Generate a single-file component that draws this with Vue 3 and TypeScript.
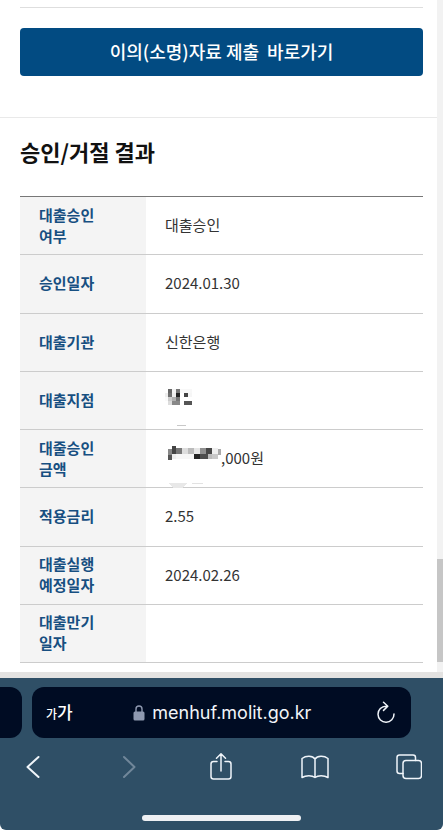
<script setup lang="ts">
interface Row {
  label: string[]
  value: string
  mask?: 'branch' | 'amount'
}

// x, y, width, height, grey (two hex digits)
type Block = [number, number, number, number, string]

const rows: Row[] = [
  { label: ['대출승인', '여부'], value: '대출승인' },
  { label: ['승인일자'], value: '2024.01.30' },
  { label: ['대출기관'], value: '신한은행' },
  { label: ['대출지점'], value: '', mask: 'branch' },
  { label: ['대줄승인', '금액'], value: ',000원', mask: 'amount' },
  { label: ['적용금리'], value: '2.55' },
  { label: ['대출실행', '예정일자'], value: '2024.02.26' },
  { label: ['대출만기', '일자'], value: '' },
]

const branch: Block[] = [
  [3, 0, 4, 4, '66'], [7, 0, 4, 4, 'f3'], [11, 0, 4, 4, '77'], [15, 0, 12, 4, 'f8'],
  [0, 4, 3, 4, 'ee'], [3, 4, 4, 4, '70'], [7, 4, 4, 4, 'ee'], [11, 4, 4, 4, '24'], [19, 4, 4, 4, '44'], [23, 4, 4, 4, 'f6'],
  [0, 8, 3, 4, 'fa'], [3, 8, 4, 4, 'cc'], [7, 8, 4, 4, 'b0'], [11, 8, 4, 4, '77'],
  [3, 12, 4, 4, 'dd'], [7, 12, 8, 4, '88'], [19, 12, 8, 4, '55'],
  [12, 36, 9, 1, 'c8'],
]

const amount: Block[] = [
  [3, 3, 4, 6, '88'], [3, 9, 4, 5, '55'], [7, 0, 4, 8, '44'], [7, 8, 4, 5, 'ee'],
  [11, 2, 6, 6, '77'], [17, 2, 6, 6, 'dd'], [23, 2, 6, 6, 'bb'], [29, 2, 6, 6, 'e6'],
  [35, 2, 6, 6, '90'], [41, 2, 6, 6, '46'], [47, 2, 6, 6, 'ee'], [53, 3, 3, 6, 'aa'],
  [11, 8, 18, 5, 'f6'], [29, 8, 6, 5, '24'], [35, 8, 8, 5, '4c'], [43, 8, 4, 5, 'bb'], [47, 8, 6, 5, 'c8'],
  [27, 37, 11, 1, 'e2'],
]

const gray = (g: string) => `#${g}${g}${g}`
</script>

<template>
  <div class="screen">
    <main class="page">
      <section class="submit">
        <button type="button" class="primary">이의(소명)자료 제출&nbsp; 바로가기</button>
      </section>
      <section class="result">
        <h2>승인/거절 결과</h2>
        <table>
          <tbody>
            <tr v-for="(row, i) in rows" :key="i">
              <th scope="row"><span v-for="part in row.label" :key="part">{{ part }}</span></th>
              <td>
                <div class="value">
                  <svg v-if="row.mask === 'branch'" width="28" height="20" viewBox="0 0 28 20" shape-rendering="crispEdges" class="mosaic" aria-hidden="true">
                    <rect v-for="([x, y, w, h, g], n) in branch" :key="n" :x="x" :y="y" :width="w" :height="h" :fill="gray(g)" />
                  </svg>
                  <svg v-if="row.mask === 'amount'" width="56" height="24" viewBox="0 0 56 24" shape-rendering="crispEdges" class="mosaic" aria-hidden="true">
                    <rect v-for="([x, y, w, h, g], n) in amount" :key="n" :x="x" :y="y" :width="w" :height="h" :fill="gray(g)" />
                    <path d="M3 37h19l-4 5H8z" fill="#e8e8e8" />
                  </svg>
                  <span>{{ row.value }}</span>
                </div>
              </td>
            </tr>
          </tbody>
        </table>
      </section>
      <div class="track" aria-hidden="true"><div class="thumb"></div></div>
    </main>

    <footer class="browser">
      <div class="tabs">
        <div class="previous"></div>
        <div class="address">
          <button type="button" class="text-size"><small>가</small>가</button>
          <div class="host">
            <svg width="12" height="16" viewBox="0 0 12 16" aria-hidden="true">
              <path d="M3 7V4a3 3 0 0 1 6 0V7" fill="none" stroke="#8e99b0" stroke-width="1.4" />
              <rect x="0.5" y="6.5" width="11" height="9" rx="1.5" fill="#8e99b0" />
            </svg>
            <span>menhuf.molit.go.kr</span>
          </div>
          <button type="button" aria-label="새로 고침">
            <svg width="24" height="24" viewBox="-4 0 24 24" class="line">
              <path d="M10 5.2A8 8 0 1 0 18 13M7.5 1.2l4.300 4-4.300 4.200" />
            </svg>
          </button>
        </div>
      </div>
      <nav class="tools">
        <button type="button" aria-label="뒤로">
          <svg width="26" height="28" viewBox="0 0 26 28" class="line bold"><path d="M17.500 4 6.500 14l11 10" /></svg>
        </button>
        <button type="button" aria-label="앞으로">
          <svg width="26" height="28" viewBox="0 0 26 28" class="line bold dim"><path d="M10 4l10.500 10L10 24" /></svg>
        </button>
        <button type="button" aria-label="공유">
          <svg width="26" height="28" viewBox="0 0 26 28" class="line">
            <path d="M9 8.500H5.500Q3 8.500 3 11V23.500q0 2.500 2.500 2.500h15Q23 26 23 23.500V11Q23 8.500 20.500 8.500H17M13 18V1M8.500 5.300 13 .8l4.500 4.500" />
          </svg>
        </button>
        <button type="button" aria-label="책갈피">
          <svg width="28" height="28" viewBox="0 0 28 28" class="line">
            <path d="M14 6C11.500 2.500 5 2.500 1 5.500V24.500C5 22 11 22 14 24.500C17 22 23 22 27 24.500V5.500C23 2.500 16.500 2.500 14 6V24.500" />
          </svg>
        </button>
        <button type="button" aria-label="탭">
          <svg width="26" height="28" viewBox="0 0 26 28" class="line">
            <rect x="7" y="7.500" width="18.500" height="18" rx="3" />
            <path d="M7 20.500H3.500Q1 20.500 1 18V4.500Q1 2 3.500 2H17Q19.500 2 19.500 4.500V7.500" />
          </svg>
        </button>
      </nav>
      <div class="home"></div>
    </footer>
  </div>
</template>

<style>
body {
  margin: 0;
  background: #fff;
}
</style>

<style scoped>
.screen {
  display: flex;
  flex-direction: column;
  min-height: 100vh;
  font-family: "Noto Sans CJK KR", sans-serif;
  color: #333;
}

.page {
  position: relative;
  padding-top: 7px;
  border-bottom: 6px solid #e3e2e1;
}

.submit {
  padding: 0 20px 41px;
  border-bottom: 1px solid #e9e9e9;
}

.submit::before {
  content: "";
  display: block;
  margin-bottom: 20px;
  border-top: 1px solid #dedede;
}

button {
  padding: 0;
  border: 0;
  background: none;
  color: #fff;
  font: inherit;
}

.primary {
  display: block;
  width: 100%;
  padding: 11px 0 13px;
  border-radius: 4px;
  background: #024b82;
  font-size: 18px;
  font-weight: 500;
  line-height: 24px;
}

.result {
  padding: 17px 20px 9px;
}

h2 {
  margin: 0 0 29px;
  color: #111;
  font-size: 22px;
  font-weight: 700;
  line-height: 32px;
}

table {
  width: 100%;
  height: 467px;
  border-collapse: collapse;
  border-top: 1px solid #777;
  font-size: 15px;
  line-height: 21px;
}

tr {
  height: 58px;
  border-bottom: 1px solid #ccc;
}

th,
td {
  padding: 6px 19px 8px;
  text-align: left;
}

th {
  width: 88px;
  background: #f4f4f4;
  color: #174f81;
  font-weight: 700;
}

th span {
  display: block;
}

.value {
  display: flex;
  align-items: center;
}

.mosaic {
  overflow: visible;
}

.track {
  position: absolute;
  top: 0;
  right: 0;
  bottom: 0;
  width: 6px;
  background: #f2f2f2;
}

.thumb {
  position: absolute;
  right: 0;
  bottom: 10px;
  width: 100%;
  height: 103px;
  background: #c6c6c6;
}

.browser {
  display: flex;
  flex: 1;
  flex-direction: column;
  padding-top: 9px;
  border-radius: 0 0 6px 6px;
  background: #2f4f66;
}

.tabs {
  display: flex;
  gap: 10px;
  padding-right: 32px;
}

.previous {
  width: 22px;
  border-radius: 0 12px 12px 0;
  background: #000c23;
}

.address {
  display: flex;
  flex: 1;
  align-items: center;
  justify-content: space-between;
  height: 51px;
  padding: 0 15px 0 14px;
  border-radius: 12px;
  background: #000c23;
  color: #f2f5f9;
}

.text-size {
  font-size: 17px;
  font-weight: 500;
  line-height: 24px;
}

.text-size small {
  font-size: 12px;
}

.host {
  display: flex;
  align-items: center;
  gap: 7px;
  font-family: Inter, sans-serif;
  font-size: 18px;
}

.line {
  display: block;
  fill: none;
  stroke: #f0f5fa;
  stroke-width: 1.5;
  stroke-linecap: round;
  stroke-linejoin: round;
}

.bold {
  stroke-width: 2;
}

.dim {
  stroke: #71879a;
}

.tools {
  display: flex;
  justify-content: space-between;
  padding: 15px 21px 0;
}

.home {
  width: 36%;
  height: 6px;
  margin: auto auto 9px;
  border-radius: 3px;
  background: #eef0f3;
}
</style>
